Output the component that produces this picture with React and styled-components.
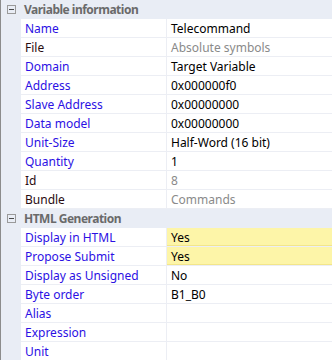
import React from "react";
import styled, { createGlobalStyle } from "styled-components";

const GlobalStyle = createGlobalStyle`
  body {
    margin: 0;
    background: #ffffff;
    font-family: "Noto Sans", "Open Sans", sans-serif;
    font-size: 12px;
  }
`

const Grid = styled.div`
  width: 332px;
  height: 360px;
  overflow: hidden;
  border-left: 1px solid #8c8c8c;
  box-sizing: border-box;
  background: #e9edf5;
`

const Section = styled.div`
  display: flex;
  flex-direction: column;
`

const SectionHeader = styled.div`
  height: 19px;
  display: flex;
  align-items: center;
  background: #e9edf5;
  color: #6a6a6a;
  font-weight: bold;
  letter-spacing: -0.5px;
`

const Toggle = styled.span`
  width: 9px;
  height: 9px;
  margin: 0 8px 0 6px;
  border: 1px solid #9a9a9a;
  box-sizing: border-box;
  position: relative;
  flex: none;

  &::after {
    content: "";
    position: absolute;
    left: 1px;
    right: 1px;
    top: 3px;
    height: 1px;
    background: #4a4a4a;
  }
`

const Row = styled.div`
  height: 19px;
  display: grid;
  grid-template-columns: 146px 1fr;
  margin-left: 20px;
  background: #ffffff;
  box-sizing: border-box;
  border-bottom: 1px solid #eceef4;
`

const Label = styled.div`
  display: flex;
  align-items: center;
  padding-left: 4px;
  border-right: 1px solid #eceef4;
  color: ${p => (p.$plain ? "#2a0c10" : "#2c10e4")};
  white-space: nowrap;
`

const Value = styled.div`
  display: flex;
  align-items: center;
  padding-left: 4px;
  white-space: nowrap;
  color: ${p => (p.$muted ? "#8a8a8a" : "#000000")};
  background: ${p => (p.$hot ? "#fdf5a8" : "transparent")};
  box-shadow: ${p => (p.$hot ? "inset 0 -1px 0 #f3e68a" : "none")};
`

const sections = [
  {
    title: "Variable information",
    rows: [
      { name: "Name", value: "Telecommand" },
      { name: "File", value: "Absolute symbols", plain: true, muted: true },
      { name: "Domain", value: "Target Variable" },
      { name: "Address", value: "0x000000f0" },
      { name: "Slave Address", value: "0x00000000" },
      { name: "Data model", value: "0x00000000" },
      { name: "Unit-Size", value: "Half-Word (16 bit)" },
      { name: "Quantity", value: "1" },
      { name: "Id", value: "8", plain: true, muted: true },
      { name: "Bundle", value: "Commands", plain: true, muted: true },
    ],
  },
  {
    title: "HTML Generation",
    rows: [
      { name: "Display in HTML", value: "Yes", hot: true },
      { name: "Propose Submit", value: "Yes", hot: true },
      { name: "Display as Unsigned", value: "No" },
      { name: "Byte order", value: "B1_B0" },
      { name: "Alias", value: "" },
      { name: "Expression", value: "" },
      { name: "Unit", value: "" },
    ],
  },
]

function App() {
  return (
    <>
      <GlobalStyle />
      <Grid>
        {sections.map(section => (
          <Section key={section.title}>
            <SectionHeader>
              <Toggle />
              {section.title}
            </SectionHeader>
            {section.rows.map(row => (
              <Row key={row.name}>
                <Label $plain={row.plain}>{row.name}</Label>
                <Value $muted={row.muted} $hot={row.hot}>{row.value}</Value>
              </Row>
            ))}
          </Section>
        ))}
      </Grid>
    </>
  )
}

export default App
